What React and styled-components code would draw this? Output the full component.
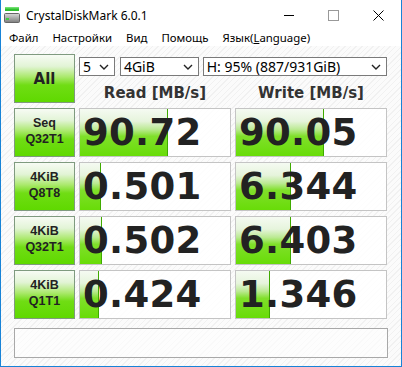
import React from 'react';
import styled, { createGlobalStyle } from 'styled-components';

const GlobalStyle = createGlobalStyle`
  html, body { margin: 0; padding: 0; background: #fff; }
  body { font-family: "Noto Sans", "Open Sans", sans-serif; }
`;

const uiFont = '"Noto Sans", "Open Sans", sans-serif';
const boldFont = '"DejaVu Sans", Verdana, sans-serif';

const Window = styled.div`
  width: 402px;
  height: 367px;
  box-sizing: border-box;
  border: 1px solid #1883d7;
  border-top: none;
  background: #fff;
  display: flex;
  flex-direction: column;
  overflow: hidden;
`;

const TitleBar = styled.div`
  height: 30px;
  display: flex;
  align-items: center;
  background: #fff;
`;

const TitleIcon = styled.div`
  width: 16px;
  height: 16px;
  margin-left: 3px;
  margin-right: 6px;
  display: flex;
`;

const TitleText = styled.span`
  font-family: ${uiFont};
  font-size: 12px;
  color: #000;
  flex: 1;
`;

const Caption = styled.div`
  width: 45px;
  height: 30px;
  display: flex;
  align-items: center;
  justify-content: center;
`;

const MenuBar = styled.div`
  height: 16px;
  display: flex;
  align-items: center;
  padding-left: 1px;
  background: #fff;
`;

const MenuItem = styled.span`
  font-family: ${uiFont};
  font-size: 11.4px;
  color: #000;
  padding: 0 7px;
  line-height: 16px;
  u { text-decoration: underline; }
`;

const Client = styled.div`
  flex: 1;
  padding: 8px 13px 8px 13px;
  background: repeating-linear-gradient(
    135deg,
    #fbfbfb 0px,
    #fbfbfb 3px,
    #f1f1f1 3px,
    #f1f1f1 4px
  );
  display: flex;
  flex-direction: column;
  gap: 9px;
`;

const Grid = styled.div`
  display: grid;
  grid-template-columns: 61px 152px 152px;
  grid-auto-rows: 49px;
  column-gap: 4px;
  row-gap: 5px;
  & > :first-child { margin-right: 1px; }
`;

const GreenButton = styled.div`
  box-sizing: border-box;
  width: 61px;
  height: 49px;
  border: 1px solid #7f9a7f;
  background: linear-gradient(
    to bottom,
    #f7fbf4 0%,
    #e2f4d6 24%,
    #ace96f 46%,
    #70dd14 64%,
    #5fd900 100%
  );
  display: flex;
  flex-direction: column;
  align-items: center;
  justify-content: center;
  font-family: ${(p) => (p.$big ? boldFont : '"Liberation Sans", Arial, sans-serif')};
  font-weight: bold;
  font-size: ${(p) => (p.$big ? '15px' : '12.5px')};
  line-height: ${(p) => (p.$big ? '18px' : '16px')};
  color: #222;
  padding-bottom: ${(p) => (p.$big ? '0' : '3px')};
`;

const TopArea = styled.div`
  grid-column: 2 / span 2;
  display: flex;
  flex-direction: column;
`;

const SelectRow = styled.div`
  margin-top: 3px;
  display: flex;
  gap: 5px;
  & > :last-child { margin-left: -1px; }
`;

const Select = styled.div`
  box-sizing: border-box;
  width: ${(p) => p.$w}px;
  height: 19px;
  border: 1px solid #7a7a7a;
  background: #fff;
  display: flex;
  align-items: center;
  padding-left: 3px;
  padding-right: 5px;
  font-family: ${uiFont};
  font-size: 14px;
  line-height: 17px;
  color: #000;
  span { flex: 1; white-space: nowrap; }
`;

const HeaderRow = styled.div`
  display: grid;
  grid-template-columns: 152px 152px;
  column-gap: 4px;
  padding-top: 8px;
`;

const Header = styled.div`
  text-align: center;
  font-family: ${boldFont};
  font-weight: bold;
  font-size: 15px;
  line-height: 18px;
  color: #333;
`;

const Cell = styled.div`
  position: relative;
  box-sizing: border-box;
  height: 49px;
  border: 1px solid #c4c4c4;
  background: rgba(255, 255, 255, 0.85);
  overflow: hidden;
`;

const Fill = styled.div`
  position: absolute;
  left: 0;
  top: 0;
  bottom: 0;
  border-right: 1px solid #3faa00;
  background: linear-gradient(
    to bottom,
    #f5faf2 0%,
    #e6f4dc 26%,
    #bcea94 43%,
    #80e02a 58%,
    #68dc08 100%
  );
`;

const Value = styled.div`
  position: relative;
  padding-left: 3px;
  font-family: ${boldFont};
  font-weight: bold;
  font-size: 37px;
  line-height: 47px;
  color: #222;
  letter-spacing: 0.3px;
`;

const CommentBox = styled.div`
  box-sizing: border-box;
  height: 30px;
  border: 1px solid #a8a8a8;
  background: rgba(255, 255, 255, 0.6);
`;

const Chevron = () => (
  <svg width="10" height="6" viewBox="0 0 10 6">
    <path d="M1 1 L5 5 L9 1" fill="none" stroke="#222" strokeWidth="1.4" />
  </svg>
);

const tests = [
  { label: ['Seq', 'Q32T1'], read: '90.72', rw: 58, write: '90.05', ww: 58 },
  { label: ['4KiB', 'Q8T8'], read: '0.501', rw: 13.5, write: '6.344', ww: 36 },
  { label: ['4KiB', 'Q32T1'], read: '0.502', rw: 14, write: '6.403', ww: 36 },
  { label: ['4KiB', 'Q1T1'], read: '0.424', rw: 12, write: '1.346', ww: 22 },
];

const ResultCell = ({ value, pct }) => (
  <Cell>
    <Fill style={{ width: `${pct}%` }} />
    <Value>{value}</Value>
  </Cell>
);

const App = () => {
  return (
    <>
      <GlobalStyle />
      <Window>
        <TitleBar>
          <TitleIcon>
            <svg width="16" height="16" viewBox="0 0 16 16">
              <defs>
                <linearGradient id="drv" x1="0" y1="0" x2="0" y2="1">
                  <stop offset="0" stopColor="#d9d9d9" />
                  <stop offset="1" stopColor="#7d7d7d" />
                </linearGradient>
              </defs>
              <rect x="1" y="0" width="14" height="4" fill="#2fbf2f" />
              <rect x="1" y="0" width="14" height="1.5" fill="#6fe06f" />
              <rect x="0.5" y="6.5" width="15" height="9" rx="1" fill="url(#drv)" stroke="#666" />
              <rect x="2" y="11" width="3" height="2" fill="#3fd03f" />
            </svg>
          </TitleIcon>
          <TitleText>CrystalDiskMark 6.0.1</TitleText>
          <Caption>
            <svg width="10" height="10" viewBox="0 0 10 10">
              <path d="M0 5.5 H10" stroke="#000" strokeWidth="1" />
            </svg>
          </Caption>
          <Caption>
            <svg width="11" height="11" viewBox="0 0 11 11">
              <rect x="0.5" y="0.5" width="10" height="10" fill="none" stroke="#999" />
            </svg>
          </Caption>
          <Caption>
            <svg width="11" height="11" viewBox="0 0 11 11">
              <path d="M0.5 0.5 L10.5 10.5 M10.5 0.5 L0.5 10.5" stroke="#000" strokeWidth="1" />
            </svg>
          </Caption>
        </TitleBar>
        <MenuBar>
          <MenuItem>Файл</MenuItem>
          <MenuItem>Настройки</MenuItem>
          <MenuItem>Вид</MenuItem>
          <MenuItem>Помощь</MenuItem>
          <MenuItem>Язык(<u>L</u>anguage)</MenuItem>
        </MenuBar>
        <Client>
          <Grid>
            <GreenButton $big>All</GreenButton>
            <TopArea>
              <SelectRow>
                <Select $w={36}><span>5</span><Chevron /></Select>
                <Select $w={79}><span>4GiB</span><Chevron /></Select>
                <Select $w={185}><span>H: 95% (887/931GiB)</span><Chevron /></Select>
              </SelectRow>
              <HeaderRow>
                <Header>Read [MB/s]</Header>
                <Header>Write [MB/s]</Header>
              </HeaderRow>
            </TopArea>
            {tests.map((t, i) => (
              <React.Fragment key={i}>
                <GreenButton>
                  <div>{t.label[0]}</div>
                  <div>{t.label[1]}</div>
                </GreenButton>
                <ResultCell value={t.read} pct={t.rw} />
                <ResultCell value={t.write} pct={t.ww} />
              </React.Fragment>
            ))}
          </Grid>
          <CommentBox />
        </Client>
      </Window>
    </>
  );
};

export default App;
